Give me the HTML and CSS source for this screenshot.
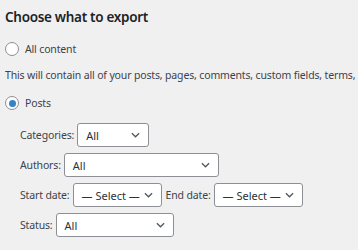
FILE: index.html
```html
<!DOCTYPE html>
<html lang="en">
<head>
<meta charset="UTF-8" />
<title>Export</title>
<link rel="stylesheet" href="styles.css">
</head>
<body>
<div class="export">
  <h2 class="title">Choose what to export</h2>

  <label class="choice">
    <span class="radio"></span>
    All content
  </label>
  <p class="desc">This will contain all of your posts, pages, comments, custom fields, terms, navigation menus, and custom posts.</p>

  <label class="choice">
    <span class="radio checked"></span>
    Posts
  </label>

  <ul class="filters">
    <li class="row">
      <span class="lbl">Categories:</span>
      <span class="select w-cat"><span>All</span><svg viewBox="0 0 10 6"><path d="M1 1l4 4 4-4"/></svg></span>
    </li>
    <li class="row">
      <span class="lbl">Authors:</span>
      <span class="select w-author"><span>All</span><svg viewBox="0 0 10 6"><path d="M1 1l4 4 4-4"/></svg></span>
    </li>
    <li class="row">
      <span class="lbl">Start date:</span>
      <span class="select w-date"><span>— Select —</span><svg viewBox="0 0 10 6"><path d="M1 1l4 4 4-4"/></svg></span>
      <span class="lbl">End date:</span>
      <span class="select w-date"><span>— Select —</span><svg viewBox="0 0 10 6"><path d="M1 1l4 4 4-4"/></svg></span>
    </li>
    <li class="row">
      <span class="lbl">Status:</span>
      <span class="select w-status"><span>All</span><svg viewBox="0 0 10 6"><path d="M1 1l4 4 4-4"/></svg></span>
    </li>
  </ul>
</div>
</body>
</html>
```

FILE: styles.css
```css
body {
  margin: 0;
  padding: 0 5px;
  background: #f0f0f1;
  font-family: "Noto Sans", "Open Sans", sans-serif;
  font-size: 10.5px;
  letter-spacing: -0.15px;
  color: #3c434a;
  overflow: hidden;
}
.export {
  display: flex;
  flex-direction: column;
}
.title {
  margin: 7px 0 0;
  font-size: 13.5px;
  font-weight: 600;
  letter-spacing: -0.3px;
  line-height: 20px;
  color: #1d2327;
}
.choice {
  display: flex;
  align-items: center;
  gap: 6px;
  line-height: 20px;
  margin-top: 12px;
}
.choice + .desc {
  margin-top: 6px;
}
.desc {
  margin: 0;
  line-height: 20px;
  white-space: nowrap;
}
.desc + .choice {
  margin-top: 8px;
}
.radio {
  width: 12px;
  height: 12px;
  border: 1px solid #8c8f94;
  border-radius: 50%;
  background: #fff;
  display: flex;
  align-items: center;
  justify-content: center;
}
.radio.checked::before {
  content: "";
  width: 7px;
  height: 7px;
  border-radius: 50%;
  background: #3582c4;
}
.filters {
  list-style: none;
  margin: 10px 0 0;
  padding: 0 0 0 15px;
  display: flex;
  flex-direction: column;
  gap: 6px;
}
.row {
  display: flex;
  align-items: center;
  gap: 3px;
}
.row .select + .lbl {
  margin-left: 1px;
}
.select {
  box-sizing: border-box;
  height: 24px;
  padding: 0 8px 0 8px;
  display: flex;
  align-items: center;
  justify-content: space-between;
  background: #fff;
  border: 1px solid #8c8f94;
  border-radius: 3px;
  color: #2c3338;
  font-size: 11px;
  letter-spacing: 0;
}
.select svg {
  flex: none;
  width: 9px;
  height: 6px;
  fill: none;
  stroke: #50575e;
  stroke-width: 1.4;
}
.w-cat { width: 72px; }
.w-author { width: 155px; }
.w-date { width: 89px; }
.w-status { width: 118px; }
```
